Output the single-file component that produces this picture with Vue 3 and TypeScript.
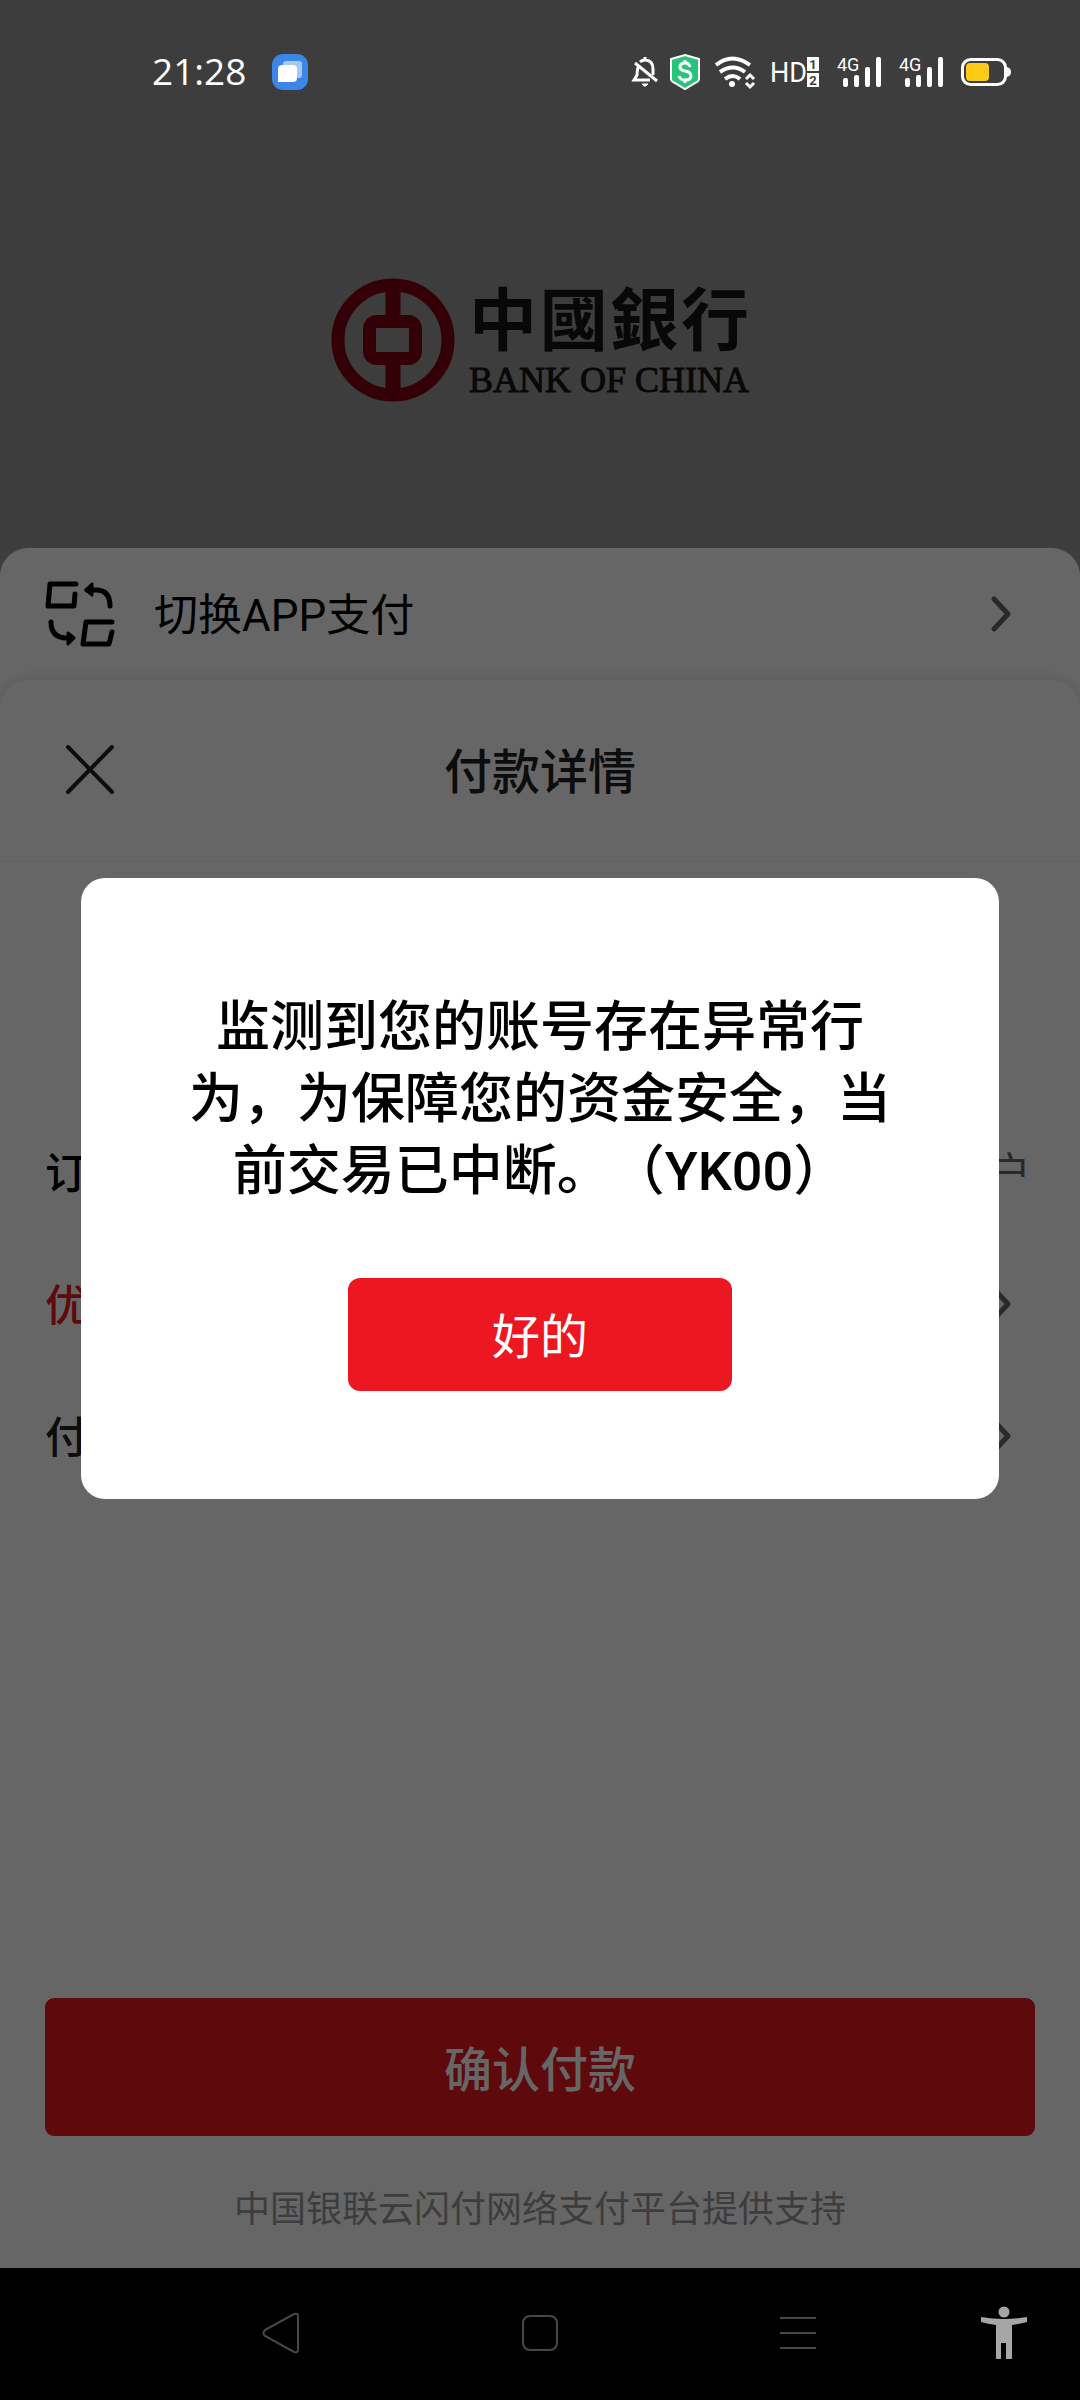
<script setup lang="ts">
import { ref } from 'vue'

interface DetailRow {
  label: string
  value?: string
  tone: 'dark' | 'red' | 'soft'
}

const rows: DetailRow[] = [
  { label: '订', value: '户', tone: 'dark' },
  { label: '优', tone: 'red' },
  { label: '付', tone: 'soft' },
]
const bankChars: string[] = ['中', '國', '銀', '行']
const dialogOpen = ref(true)
</script>

<template>
  <div class="phone">
    <div class="status">
      <div class="status-left">
        <span class="clock">21:28</span>
        <svg width="36" height="36" viewBox="0 0 36 36" aria-hidden="true">
          <rect width="36" height="36" rx="11" fill="#3c86e8" />
          <rect x="11" y="7" width="19" height="17" rx="3" fill="#a5c8f8" />
          <path d="M6 15q0-4 4-4h11q4 0 4 4v9q0 4-4 4H6z" fill="#fff" />
        </svg>
      </div>
      <div class="status-right">
        <svg class="bell" width="26" height="32" viewBox="0 0 26 32" fill="none" stroke="#fff" stroke-width="3" aria-hidden="true">
          <path d="M13 1v4M8 6q2-2 5-2 8 0 8 9v6M6 11q-1 5-1 8l-3 5h16M3 7l22 18" />
          <path d="M10 28h6l-2 2h-2z" fill="#fff" stroke-width="1" />
        </svg>
        <svg class="shield" width="30" height="36" viewBox="0 0 30 36" fill="none" stroke="#fff" aria-hidden="true">
          <path d="M15 1 29 5v20q0 2-2 3L15 35 3 28q-2-1-2-3V5z" fill="#27c57c" stroke-width="2" />
          <path d="M20 13q-1-4-5-4-5 0-5 4 0 3 5 4 6 1 6 5t-6 4q-5 0-6-4M15 6v3M15 26v3" stroke-width="3" />
        </svg>
        <svg class="wifi" width="41" height="32" viewBox="0 0 41 32" fill="none" stroke="#fff" aria-hidden="true">
          <path d="M2 9q16-13 34 0M6 16q13-9 25 0M11 23q8-6 15 0" stroke-width="4" />
          <circle cx="18" cy="28" r="3" fill="#fff" stroke="none" />
          <path d="M32 23 36 19 40 23M32 27l4 4 4-4" stroke-width="3" />
        </svg>
        <svg class="hd" width="49" height="32" viewBox="0 0 49 32" aria-hidden="true">
          <text class="label" x="0" y="26" font-size="27" fill="#fff">HD</text>
          <rect x="37" y="1" width="12" height="14" fill="#fff" />
          <rect x="37" y="17" width="12" height="14" fill="#fff" />
          <text class="tiny" x="43" y="13" font-size="13" text-anchor="middle" fill="#3d3d3d">1</text>
          <text class="tiny" x="43" y="29" font-size="13" text-anchor="middle" fill="#3d3d3d">2</text>
        </svg>
        <svg v-for="n in 2" :key="n" class="signal" width="44" height="32" viewBox="0 0 44 32" aria-hidden="true">
          <text class="label" x="0" y="15" font-size="18" fill="#fff">4G</text>
          <g fill="#fff">
            <rect x="6" y="22" width="5" height="9" rx="2" />
            <rect x="17" y="19" width="5" height="12" rx="2" />
            <rect x="28" y="11" width="5" height="20" rx="2" />
            <rect x="39" y="1" width="5" height="30" rx="2" />
          </g>
        </svg>
        <svg width="50" height="28" viewBox="0 0 50 28" aria-hidden="true">
          <rect x="1.500" y="1.500" width="43" height="25" rx="8" fill="none" stroke="#fff" stroke-width="3" />
          <rect x="5" y="5" width="23" height="18" rx="4" fill="#fcca17" />
          <path d="M46 9q4 1 4 5t-4 5z" fill="#fff" />
        </svg>
      </div>
    </div>

    <main class="screen">
      <header class="bank">
        <svg width="124" height="124" viewBox="0 0 124 124" aria-hidden="true">
          <g fill="none" stroke="#800014">
            <circle cx="62" cy="62" r="55" stroke-width="13" />
            <rect x="38.500" y="43.500" width="46" height="37" rx="7" stroke-width="13" />
          </g>
          <path d="M54.500 10h15v30h-15zM54.500 84h15v30h-15z" fill="#800014" />
        </svg>
        <div class="bank-name">
          <div class="bank-zh"><span v-for="c in bankChars" :key="c">{{ c }}</span></div>
          <div class="bank-en">BANK OF CHINA</div>
        </div>
      </header>

      <button class="switch" type="button">
        <svg width="70" height="66" viewBox="0 0 70 66" fill="none" stroke="#000" stroke-width="5" stroke-linecap="round" stroke-linejoin="round" aria-hidden="true">
          <path d="M31 3H5L3 25h26l1-12M42 9h9q14 0 14 16M67 41H41l-3 22h26l3-12M6 41q0 16 16 16h5" />
          <path d="M47 3 41 9l6 5zM23 52l6 5-6 6z" stroke-width="3" fill="#000" />
        </svg>
        <span class="switch-label">切换APP支付</span>
        <svg class="chevron" width="20" height="36" viewBox="0 0 20 36" aria-hidden="true"><path d="M3 3 17 18 3 33" /></svg>
      </button>

      <section class="sheet">
        <div class="sheet-head">
          <button class="close" type="button" aria-label="关闭">
            <svg width="50" height="50" viewBox="0 0 50 50" fill="none" stroke="#222" stroke-width="4" stroke-linecap="round"><path d="M3 2 47 47M47 2 3 47" /></svg>
          </button>
          <h1>付款详情</h1>
        </div>
        <div class="rows">
          <div v-for="row in rows" :key="row.label" class="row">
            <span class="row-text" :class="row.tone">{{ row.label }}</span>
            <span v-if="row.value" class="row-text value">{{ row.value }}</span>
            <svg v-else class="chevron" width="20" height="36" viewBox="0 0 20 36" aria-hidden="true"><path d="M3 3 17 18 3 33" /></svg>
          </div>
        </div>
        <button class="confirm" type="button">确认付款</button>
        <p class="support">中国银联云闪付网络支付平台提供支持</p>
      </section>

      <div v-if="dialogOpen" class="overlay">
        <div class="dialog" role="alertdialog" aria-modal="true" aria-labelledby="dialog-text">
          <p id="dialog-text">监测到您的账号存在异常行为，为保障您的资金安全，当前交易已中断。（YK00）</p>
          <button type="button" @click="dialogOpen = false">好的</button>
        </div>
      </div>
    </main>

    <nav class="nav">
      <div class="nav-keys">
        <button type="button" aria-label="返回">
          <svg width="40" height="44" viewBox="0 0 40 44"><path d="M4 19 33 3q4-1 4 2v34q0 3-4 2L4 25q-3-3 0-6z" /></svg>
        </button>
        <button type="button" aria-label="主页">
          <svg width="40" height="44" viewBox="0 0 40 44"><rect x="3" y="5" width="34" height="34" rx="7" /></svg>
        </button>
        <button type="button" aria-label="最近任务">
          <svg width="40" height="44" viewBox="0 0 40 44"><path d="M1 7h36M1 22h36M1 37h36" /></svg>
        </button>
      </div>
      <button class="access" type="button" aria-label="无障碍">
        <svg width="48" height="54" viewBox="0 0 48 54">
          <circle cx="24" cy="6" r="5.500" />
          <path d="M1 11q23 4 46 0v5q-7 2-15 3v34h-6V37h-5v16h-5V19Q8 18 1 16z" />
        </svg>
      </button>
    </nav>
  </div>
</template>

<style>
body {
  margin: 0;
  background: #000;
}
</style>

<style scoped>
.phone {
  position: relative;
  display: flex;
  flex-direction: column;
  min-height: 100vh;
  font-family: Roboto, 'Noto Sans CJK SC', sans-serif;
  text-spacing-trim: space-all;
}
button {
  border: 0;
  padding: 0 0 2px;
  background: none;
  font: inherit;
  color: inherit;
}
svg {
  display: block;
  flex: none;
  overflow: visible;
}
h1,
p {
  margin: 0;
}
.status {
  position: absolute;
  inset: 0 0 auto;
  z-index: 2;
  box-sizing: border-box;
  height: 144px;
  padding: 0 69px 0 152px;
  display: flex;
  align-items: center;
  justify-content: space-between;
  color: #fff;
}
.status-left {
  display: flex;
  align-items: center;
  gap: 26px;
}
.clock {
  padding-bottom: 2px;
  font: 37px/48px 'Open Sans', sans-serif;
}
.status-right {
  display: flex;
  align-items: center;
}
.bell {
  margin-right: 12px;
}
.shield {
  margin-right: 14px;
}
.wifi {
  margin-right: 15px;
}
.hd,
.signal {
  margin-right: 18px;
}
.label {
  font-family: Roboto, sans-serif;
}
.tiny {
  font-family: Roboto, sans-serif;
  font-weight: 700;
}
.screen {
  position: relative;
  flex: 1;
  display: flex;
  flex-direction: column;
  background: #999;
}
.bank {
  height: 548px;
  box-sizing: border-box;
  padding-top: 132px;
  display: flex;
  align-items: center;
  justify-content: center;
  gap: 14px;
  color: #141414;
}
.bank-name {
  display: flex;
  flex-direction: column;
  gap: 8px;
}
.bank-zh {
  display: flex;
  justify-content: space-between;
  font: 700 68px/72px 'Noto Sans CJK TC', sans-serif;
}
.bank-en {
  font: 36px/40px 'Liberation Serif', serif;
  -webkit-text-stroke: 1px #141414;
}
.switch {
  display: flex;
  align-items: center;
  gap: 39px;
  box-sizing: border-box;
  width: 100%;
  height: 160px;
  margin-bottom: -28px;
  padding: 0 69px 28px 45px;
  border-radius: 28px 28px 0 0;
  background: #fff;
  color: #000;
  font-size: 44px;
  text-align: left;
}
.switch-label {
  flex: 1;
  padding-bottom: 4px;
}
.chevron {
  fill: none;
  stroke: #666;
  stroke-width: 5;
  stroke-linecap: round;
  stroke-linejoin: round;
}
.sheet {
  flex: 1;
  display: flex;
  flex-direction: column;
  border-radius: 28px 28px 0 0;
  background: #fff;
  box-shadow: 0 -4px 12px rgba(0, 0, 0, 0.08);
}
.sheet-head {
  display: flex;
  align-items: center;
  height: 181px;
  padding: 0 65px;
  border-bottom: 1px solid #f4f4f4;
}
.sheet-head h1 {
  flex: 1;
  padding: 4px 50px 0 0;
  text-align: center;
  font-size: 48px;
  font-weight: 500;
  line-height: 72px;
  color: #222;
}
.rows {
  flex: 1;
  padding: 244px 69px 0 45px;
}
.row {
  display: flex;
  align-items: center;
  justify-content: space-between;
  height: 132px;
  font-size: 43px;
}
.row-text {
  padding-bottom: 4px;
  font-weight: 500;
}
.dark {
  color: #000;
}
.red {
  color: #ec1720;
}
.soft {
  color: #222;
}
.value {
  margin-right: -20px;
  font-weight: 400;
  color: #666;
}
.confirm {
  height: 138px;
  margin: 0 45px;
  border-radius: 9px;
  background: #ec1720;
  color: #fff;
  font-size: 48px;
  font-weight: 500;
}
.support {
  padding: 38px 0 22px;
  text-align: center;
  font-size: 36px;
  line-height: 72px;
  color: #999;
}
.overlay {
  position: absolute;
  inset: 0;
  display: flex;
  align-items: center;
  justify-content: center;
  padding-top: 108px;
  background: rgba(0, 0, 0, 0.6);
}
.dialog {
  display: flex;
  flex-direction: column;
  align-items: center;
  gap: 70px;
  box-sizing: border-box;
  width: 85%;
  padding: 114px 108px 108px;
  border-radius: 24px;
  background: #fff;
  color: #000;
}
.dialog p {
  text-align: center;
  font-size: 54px;
  font-weight: 500;
  line-height: 72px;
}
.dialog button {
  width: 384px;
  height: 113px;
  border-radius: 12px;
  background: #ec1720;
  color: #fff;
  font-size: 48px;
}
.nav {
  position: relative;
  height: 132px;
  display: flex;
  align-items: center;
  justify-content: center;
  background: #000;
}
.nav-keys {
  display: flex;
  justify-content: space-between;
  width: 558px;
}
.nav-keys svg {
  fill: none;
  stroke: #474747;
  stroke-width: 2;
}
.access {
  position: absolute;
  right: 52px;
}
.access svg {
  fill: #a6a6a6;
}
</style>
